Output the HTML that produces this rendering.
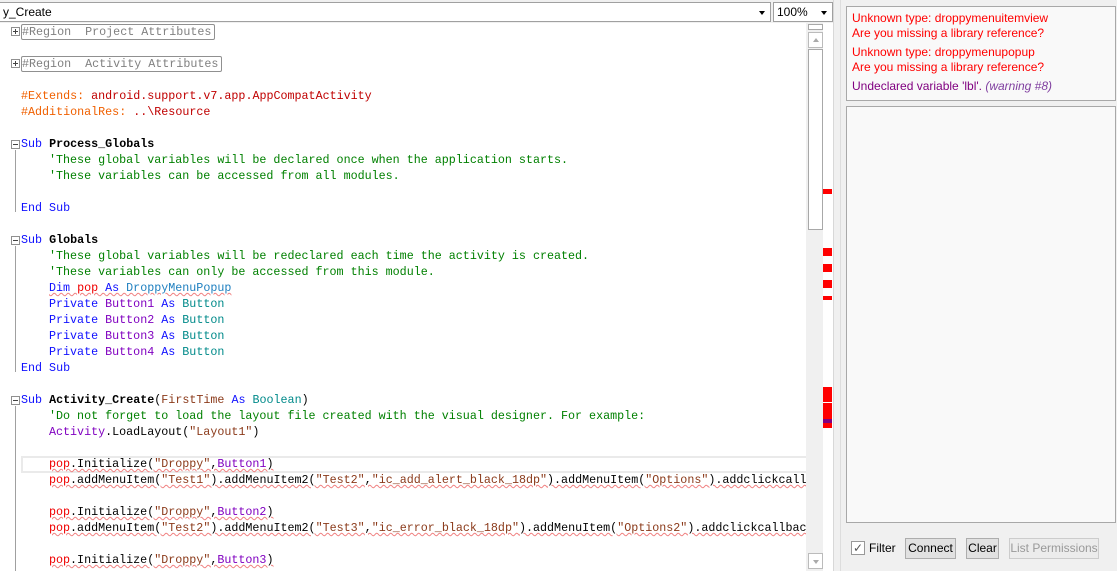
<!DOCTYPE html>
<html><head><style>
*{margin:0;padding:0;box-sizing:border-box}
body{width:1117px;height:571px;overflow:hidden;background:#f0f0f0;position:relative;font-family:"Liberation Sans",sans-serif}
.top{position:absolute;left:0;top:0;width:833px;height:23px;background:#f0f0f0}
.cb{position:absolute;top:2px;height:20px;background:#fff;border:1px solid #a0a0a0;font-size:12px;line-height:18px;padding-left:3px}
.arr{position:absolute;right:5px;top:8px;width:0;height:0;border-left:3px solid transparent;border-right:3px solid transparent;border-top:4px solid #000}
.code{position:absolute;left:0;top:23px;width:806px;height:548px;background:#fff;overflow:hidden}
.ln{position:absolute;left:0;height:16px;line-height:16px;font-family:"Liberation Mono",monospace;font-size:11.7px;white-space:pre;color:#000}
.k{color:#1010ff}.c{color:#008000}.b{font-weight:bold}.p{color:#8000c0}.t{color:#008a8a}.d{color:#f00000}.g{color:#808080}.s{color:#8b3a1a}
.sq{text-decoration:underline wavy #f08080;text-decoration-thickness:1px}
.reg{border:1px solid #909090;border-radius:2px;padding:0 3px 0 0}
.fold{position:absolute;left:11px;width:9px;height:9px;border:1px solid #909090;background:#fff}
.fold::after{content:"";position:absolute;left:1px;top:3px;width:5px;height:1px;background:#444}
.plus::before{content:"";position:absolute;left:3px;top:1px;width:1px;height:5px;background:#444}
.vl{position:absolute;left:15px;width:1px;background:#a0a0a0}
.sb{position:absolute;left:806px;top:23px;width:17px;height:548px;background:#f0f0f0}
.strip{position:absolute;left:823px;top:23px;width:10px;height:548px;background:#fff}
.m{position:absolute;left:823px;width:9px;background:#f00}
.rp{position:absolute;left:840px;top:0;width:277px;height:571px;background:#f0f0f0;border-left:1px solid #ddd}
.box{position:absolute;left:846px;width:270px;background:#f9f9f9;border:1px solid #a8a8a8}
.msg{font-size:12px;line-height:15px;padding-left:5px}
.btn{position:absolute;top:538px;height:21px;border:1px solid #adadad;background:#e1e1e1;font-size:12px;line-height:19px;text-align:center}
</style></head><body>
<div class="top">
<div class="cb" style="left:-1px;width:772px">y_Create<div class="arr"></div></div>
<div class="cb" style="left:773px;width:60px">100%<div class="arr"></div></div>
</div>
<div class="code">
<div style="position:absolute;left:21px;top:433px;width:790px;height:17px;border:2px solid #eaeaea"></div>
<div class="fold plus" style="top:4px"></div>
<div class="ln" style="top:1px;left:21px"><span class="reg g">#Region  Project Attributes</span></div>
<div class="fold plus" style="top:36px"></div>
<div class="ln" style="top:33px;left:21px"><span class="reg g">#Region  Activity Attributes</span></div>
<div class="ln" style="top:65px;left:21px"><span style="color:#f06000">#Extends:</span><span style="color:#c00000"> android.support.v7.app.AppCompatActivity</span></div>
<div class="ln" style="top:81px;left:21px"><span style="color:#f06000">#AdditionalRes:</span><span style="color:#c00000"> ..\Resource</span></div>
<div class="fold" style="top:117px"></div><div class="vl" style="top:127px;height:62px"></div>
<div class="ln" style="top:113px;left:21px"><span class="k">Sub</span> <span class="b">Process_Globals</span></div>
<div class="ln c" style="top:129px;left:49px">'These global variables will be declared once when the application starts.</div>
<div class="ln c" style="top:145px;left:49px">'These variables can be accessed from all modules.</div>
<div class="ln" style="top:177px;left:21px"><span class="k">End Sub</span></div>
<div class="fold" style="top:213px"></div><div class="vl" style="top:223px;height:126px"></div>
<div class="ln" style="top:209px;left:21px"><span class="k">Sub</span> <span class="b">Globals</span></div>
<div class="ln c" style="top:225px;left:49px">'These global variables will be redeclared each time the activity is created.</div>
<div class="ln c" style="top:241px;left:49px">'These variables can only be accessed from this module.</div>
<div class="ln" style="top:257px;left:49px"><span class="sq"><span class="k">Dim</span> <span class="d">pop</span> <span class="k">As</span> <span style="color:#2080c0">DroppyMenuPopup</span></span></div>
<div class="ln" style="top:273px;left:49px"><span class="k">Private</span> <span class="p">Button1</span> <span class="k">As</span> <span class="t">Button</span></div>
<div class="ln" style="top:289px;left:49px"><span class="k">Private</span> <span class="p">Button2</span> <span class="k">As</span> <span class="t">Button</span></div>
<div class="ln" style="top:305px;left:49px"><span class="k">Private</span> <span class="p">Button3</span> <span class="k">As</span> <span class="t">Button</span></div>
<div class="ln" style="top:321px;left:49px"><span class="k">Private</span> <span class="p">Button4</span> <span class="k">As</span> <span class="t">Button</span></div>
<div class="ln" style="top:337px;left:21px"><span class="k">End Sub</span></div>
<div class="fold" style="top:373px"></div><div class="vl" style="top:383px;height:170px"></div>
<div class="ln" style="top:369px;left:21px"><span class="k">Sub</span> <span class="b">Activity_Create</span>(<span class="s">FirstTime</span> <span class="k">As</span> <span class="t">Boolean</span>)</div>
<div class="ln c" style="top:385px;left:49px">'Do not forget to load the layout file created with the visual designer. For example:</div>
<div class="ln" style="top:401px;left:49px"><span class="p">Activity</span>.LoadLayout(<span class="s">"Layout1"</span>)</div>
<div class="ln" style="top:433px;left:49px"><span class="sq"><span class="d">pop</span>.Initialize(<span class="s">"Droppy"</span>,<span class="p">Button1</span>)</span></div>
<div class="ln" style="top:449px;left:49px"><span class="sq"><span class="d">pop</span>.addMenuItem(<span class="s">"Test1"</span>).addMenuItem2(<span class="s">"Test2"</span>,<span class="s">"ic_add_alert_black_18dp"</span>).addMenuItem(<span class="s">"Options"</span>).addclickcallback</span></div>
<div class="ln" style="top:481px;left:49px"><span class="sq"><span class="d">pop</span>.Initialize(<span class="s">"Droppy"</span>,<span class="p">Button2</span>)</span></div>
<div class="ln" style="top:497px;left:49px"><span class="sq"><span class="d">pop</span>.addMenuItem(<span class="s">"Test2"</span>).addMenuItem2(<span class="s">"Test3"</span>,<span class="s">"ic_error_black_18dp"</span>).addMenuItem(<span class="s">"Options2"</span>).addclickcallback</span></div>
<div class="ln" style="top:529px;left:49px"><span class="sq"><span class="d">pop</span>.Initialize(<span class="s">"Droppy"</span>,<span class="p">Button3</span>)</span></div>
</div>
<div class="sb">
<div style="position:absolute;left:2px;top:1px;width:15px;height:6px;border:1px solid #a8a8a8;background:#fff"></div>
<div style="position:absolute;left:2px;top:9px;width:15px;height:16px;border:1px solid #bbb;background:#fff"><div style="position:absolute;left:4px;top:5px;border-left:3px solid transparent;border-right:3px solid transparent;border-bottom:4px solid #aaa"></div></div>
<div style="position:absolute;left:2px;top:26px;width:15px;height:181px;border:1px solid #a8a8a8;background:#fff"></div>
<div style="position:absolute;left:2px;top:530px;width:15px;height:16px;border:1px solid #bbb;background:#fff"><div style="position:absolute;left:4px;top:6px;border-left:3px solid transparent;border-right:3px solid transparent;border-top:4px solid #aaa"></div></div>
</div>
<div class="strip"></div>
<div class="m" style="top:189px;height:5px"></div>
<div class="m" style="top:248px;height:8px"></div>
<div class="m" style="top:264px;height:8px"></div>
<div class="m" style="top:280px;height:8px"></div>
<div class="m" style="top:296px;height:4px"></div>
<div class="m" style="top:387px;height:15px"></div>
<div class="m" style="top:403px;height:16px"></div>
<div class="m" style="top:419px;height:4px;background:#800080"></div>
<div class="m" style="top:423px;height:5px"></div>
<div style="position:absolute;left:833px;top:0;width:7px;height:571px;background:#f0f0f0;border-left:1px solid #d8d8d8"></div>
<div class="rp"></div>
<div class="box" style="top:6px;height:95px;padding-top:4px">
<div class="msg" style="color:#f00">Unknown type: droppymenuitemview<br>Are you missing a library reference?</div>
<div class="msg" style="color:#f00;margin-top:4px">Unknown type: droppymenupopup<br>Are you missing a library reference?</div>
<div class="msg" style="color:#800080;margin-top:4px">Undeclared variable 'lbl'. <i style="color:#8040a0">(warning #8)</i></div>
</div>
<div class="box" style="top:106px;height:417px"></div>
<div style="position:absolute;left:851px;top:541px;width:14px;height:14px;border:1px solid #999;background:#fff;font-size:12px;line-height:12px;color:#555;text-align:center">✓</div>
<div style="position:absolute;left:869px;top:540px;font-size:12px;line-height:16px">Filter</div>
<div class="btn" style="left:905px;width:51px">Connect</div>
<div class="btn" style="left:966px;width:33px">Clear</div>
<div class="btn" style="left:1009px;width:90px;color:#999;background:#ececec;border-color:#ccc">List Permissions</div>
</body></html>
